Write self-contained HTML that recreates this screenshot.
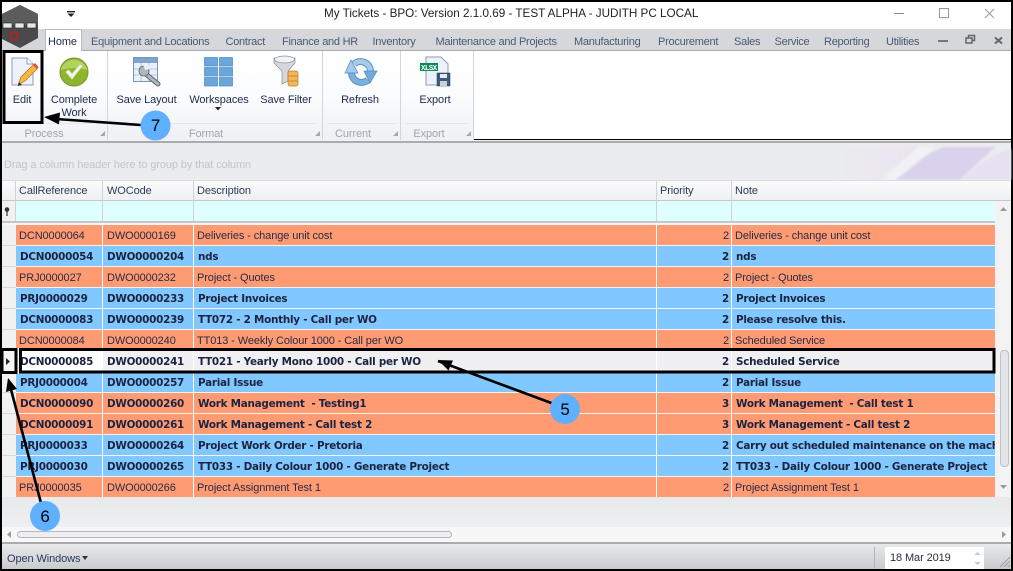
<!DOCTYPE html>
<html><head><meta charset="utf-8"><style>
html,body{margin:0;padding:0;background:#000}
#p{position:relative;width:1013px;height:571px;overflow:hidden;background:#000;font-family:"Liberation Sans",sans-serif;font-size:11px;letter-spacing:-.1px;color:#2a2f4f}
#p div,#p span{position:absolute;white-space:nowrap}
.a{line-height:14px}
.t{top:35px;color:#4a5a70;letter-spacing:-.25px}
.b{text-align:center;color:#1e2a50}
.g{top:127px;color:#a0a4ae;text-align:center}
.sep{top:51px;width:1px;height:89px;background:#d3d5da}
.h{top:184px;color:#2c3a5a}
.r{left:16px;width:979px;height:20px;overflow:hidden}
.o{background:#ff9b73}
.u{background:#80c8ff}
.s{background:#f0f0f2}
.r span{top:4px;line-height:14px;color:#2a2a44}
.c1{left:3px}.c2{left:91px}.c3{left:181px}.c4{left:641px;width:72px;text-align:right}.c5{left:719px}
.k span{font-family:"DejaVu Sans",sans-serif;font-weight:bold;font-size:10.4px;letter-spacing:-.25px;color:#1c2340}
.k .c1{left:4px}.k .c3{left:182px}.k .c5{left:720px}
.v{width:1px;background:#fff;top:225px;height:272px}
.i{left:2px;width:14px;height:20px;background:#f1f1f2;border-bottom:1px solid #d8d8da}
.l{width:1px;height:40px;top:181px;background:#d0d2d6}
</style></head><body><div id="p">
<div style="left:2px;top:2px;width:1009px;height:27px;background:#fff"></div>
<div style="left:2px;top:29px;width:1009px;height:21px;background:#d5d7db"></div>
<div style="left:2px;top:50px;width:1009px;height:1px;background:#a8abb0"></div>
<div class="a" style="left:324px;top:7px;color:#222;font-size:11.7px;letter-spacing:0">My Tickets - BPO: Version 2.1.0.69 - TEST ALPHA - JUDITH PC LOCAL</div>

<svg style="position:absolute;left:0;top:0" width="1013" height="60">
<polygon points="20,5 38,14 38,38 20,48 2,39 2,14" fill="#4a4a4c"/>
<polygon points="20,5 38,14 38,25 2,25 2,14" fill="#5c5c5e"/>
<rect x="3" y="23" width="9" height="5" fill="#e8e8e8" stroke="#222" stroke-width=".6"/><rect x="15" y="23" width="9" height="5" fill="#e8e8e8" stroke="#222" stroke-width=".6"/><rect x="27" y="23" width="9" height="5" fill="#e8e8e8" stroke="#222" stroke-width=".6"/>
<circle cx="14" cy="36" r="4" fill="none" stroke="#e01010" stroke-width="1.3"/>
<path d="M67 11h8v1.400h-8zM67.500 13.500h7l-3.500 3.500z" fill="#222"/>
<path d="M894 13.500h10" stroke="#888" fill="none"/>
<rect x="939.500" y="8.500" width="9" height="9" fill="none" stroke="#999"/>
<path d="M985 9l9 9M994 9l-9 9" stroke="#999" fill="none"/>
<rect x="938" y="40" width="10" height="2" fill="#777"/>
<path d="M966 38h6v5h-6zM968.500 38v-2.500h6v5h-2.500" fill="none" stroke="#666" stroke-width="1.500"/>
<path d="M995 37.500l7 6M1002 37.500l-7 6" stroke="#666" stroke-width="2" fill="none"/>
</svg>

<div style="left:45px;top:29px;width:37px;height:22px;background:#fff;border:1px solid #b9bcc2;border-bottom:0;box-sizing:border-box"></div>
<div class="a" style="left:48px;top:35px;color:#1e2a50">Home</div>
<div class="a t" style="left:91px">Equipment and Locations</div>
<div class="a t" style="left:225.500px">Contract</div>
<div class="a t" style="left:282px">Finance and HR</div>
<div class="a t" style="left:372.500px">Inventory</div>
<div class="a t" style="left:435.500px">Maintenance and Projects</div>
<div class="a t" style="left:574px">Manufacturing</div>
<div class="a t" style="left:658px">Procurement</div>
<div class="a t" style="left:734px">Sales</div>
<div class="a t" style="left:774.500px">Service</div>
<div class="a t" style="left:824px">Reporting</div>
<div class="a t" style="left:886px">Utilities</div>

<div style="left:2px;top:51px;width:471px;height:89px;background:linear-gradient(#fff 0,#fbfcfd 50%,#eef0f4 100%)"></div>
<div style="left:473px;top:51px;width:538px;height:88px;background:#fff"></div>
<div style="left:2px;top:140px;width:1009px;height:1px;background:#f0f1f3"></div>
<div style="left:2px;top:141px;width:1009px;height:2px;background:#a9abae"></div>
<div style="left:2px;top:143px;width:1009px;height:37px;background:#ebecef"></div>
<div class="sep" style="left:107px"></div><div class="sep" style="left:322px"></div><div class="sep" style="left:400px"></div><div class="sep" style="left:473px"></div>
<div style="left:8px;top:123px;width:94px;height:1px;background:#e4e6ea"></div>
<div style="left:112px;top:123px;width:205px;height:1px;background:#e4e6ea"></div>
<div style="left:328px;top:123px;width:67px;height:1px;background:#e4e6ea"></div>
<div style="left:406px;top:123px;width:62px;height:1px;background:#e4e6ea"></div>

<svg style="position:absolute;left:0;top:50px" width="480" height="92">
<!-- Edit -->
<path d="M12 8h15l6 6v21H12z" fill="#eef3fb" stroke="#8a9cc4"/>
<path d="M27 8v6h6" fill="#fff" stroke="#8a9cc4"/>
<path d="M18 35l3-8 13-13 4 4-13 13z" fill="#f5b642" stroke="#b86a1c" stroke-width=".7"/>
<path d="M33 15l4 4 1.500-2-3.500-4z" fill="#d8524a"/><path d="M18 36l1-4 3 3z" fill="#333"/>
<!-- complete -->
<circle cx="74" cy="22" r="14" fill="#8fb52c" stroke="#74962a"/>
<path d="M60.500 20a14 14 0 0 1 27 0a30 16 0 0 0-27 0" fill="#bcd86a" opacity=".8"/>
<path d="M66 22l6 7 10-13-2-1-8 9-3.500-4z" fill="#f4f6e8" stroke="#e6e8d8" stroke-width=".8"/>
<!-- save layout -->
<rect x="133.500" y="7.500" width="24" height="24" fill="#e9f0f8" stroke="#7c95b5"/>
<rect x="134" y="8" width="23" height="5" fill="#7fa5cf"/>
<path d="M134 19h23M134 25h23M141 13v18M149 13v18" stroke="#b8c8dc" fill="none"/>
<path d="M147 25L158 34" stroke="#5c6670" stroke-width="5" stroke-linecap="round"/>
<path d="M147 25L158 34" stroke="#b0b6bd" stroke-width="3" stroke-linecap="round"/>
<circle cx="144" cy="21" r="5" fill="#b0b6bd" stroke="#5c6670" stroke-width=".8"/>
<path d="M143 14l2 6 5-1-1-4-3-2z" fill="#e9f0f8"/>
<!-- workspaces -->
<g fill="#6aa6dc" stroke="#4a8ac2" stroke-width=".7"><rect x="204.500" y="7.500" width="13" height="8.500"/><rect x="219.500" y="7.500" width="13" height="8.500"/><rect x="204.500" y="17.500" width="13" height="8.500"/><rect x="219.500" y="17.500" width="13" height="8.500"/><rect x="204.500" y="27.500" width="13" height="8.500"/><rect x="219.500" y="27.500" width="13" height="8.500"/></g>
<path d="M215 57h6l-3 3.500z" fill="#222"/>
<!-- filter -->
<path d="M274 8h21v5l-7 8v10l-6 3V21l-8-8z" fill="#d4d8dc" stroke="#8a9098" stroke-width=".7"/>
<ellipse cx="284.500" cy="9.500" rx="10" ry="3.500" fill="#f2f3f5" stroke="#8a9098" stroke-width=".7"/>
<rect x="288" y="21" width="10" height="15" rx="2" fill="#f2b75a" stroke="#b87a24" stroke-width=".7"/>
<path d="M288 26h10M288 31h10" stroke="#c98b30" fill="none"/>
<!-- refresh -->
<path d="M354 14A10 10 0 0 1 370.500 21" fill="none" stroke="#5c93c4" stroke-width="7"/>
<path d="M354 14A10 10 0 0 1 370.500 21" fill="none" stroke="#a4cbea" stroke-width="5"/>
<path d="M364 21h13l-7 12z" fill="#74aadb" stroke="#4f86b8" stroke-width=".7"/>
<path d="M368 30A10 10 0 0 1 351.500 23" fill="none" stroke="#5c93c4" stroke-width="7"/>
<path d="M368 30A10 10 0 0 1 351.500 23" fill="none" stroke="#7cb0dc" stroke-width="5"/>
<path d="M345 23h13l-7-13z" fill="#a4cbea" stroke="#4f86b8" stroke-width=".7"/>
<!-- export -->
<path d="M426 7h15l7 7v21h-22z" fill="#eef2f8" stroke="#8a9cb8"/>
<rect x="420" y="13" width="18" height="8" fill="#0b8a5c"/>
<text x="421" y="20" font-family="Liberation Mono,monospace" font-weight="bold" font-size="7.500" fill="#fff" textLength="16">XLSX</text>
<rect x="437" y="23" width="13" height="13" fill="#3a5a80" stroke="#2a3a50" stroke-width=".5"/>
<rect x="440" y="24" width="7" height="4" fill="#e8ecf0"/><rect x="440" y="31" width="7" height="5" fill="#c8d0d8"/>
<path d="M100 86l5 0 0-5zM315 86l5 0 0-5zM393 86l5 0 0-5zM466 86l5 0 0-5z" fill="#a4a8ae"/>
</svg>

<div class="a b" style="left:2px;top:93px;width:40px">Edit</div>
<div class="a b" style="left:44px;top:93px;width:60px">Complete</div>
<div class="a b" style="left:44px;top:106px;width:60px">Work</div>
<div class="a b" style="left:110px;top:93px;width:73px">Save Layout</div>
<div class="a b" style="left:184px;top:93px;width:70px">Workspaces</div>
<div class="a b" style="left:256px;top:93px;width:60px">Save Filter</div>
<div class="a b" style="left:330px;top:93px;width:60px">Refresh</div>
<div class="a b" style="left:405px;top:93px;width:60px">Export</div>
<div class="a g" style="left:14px;width:60px">Process</div>
<div class="a g" style="left:176px;width:60px">Format</div>
<div class="a g" style="left:323px;width:60px">Current</div>
<div class="a g" style="left:399px;width:60px">Export</div>

<div class="a" style="left:4px;top:158px;color:#c2c4c9">Drag a column header here to group by that column</div>
<svg style="position:absolute;left:840px;top:147px;filter:blur(1px)" width="171" height="33">
<defs><linearGradient id="f1" x1="0" x2="1" y1="0" y2="0"><stop offset="0" stop-color="#ebecef"/><stop offset="1" stop-color="#ebe3f1"/></linearGradient></defs>
<path d="M0 0H80L38 33H0z" fill="url(#f1)"/>
<path d="M42 33L78 0H95L55 33z" fill="#f1f1f4"/>
<path d="M55 33C75 20 85 5 105 0H155C145 10 128 24 120 33z" fill="#d9d2ec"/>
<path d="M120 33C135 20 150 8 171 2V33z" fill="#e6e2f1"/>
</svg>

<div style="left:2px;top:180px;width:1009px;height:1px;background:#dcdde0"></div>
<div style="left:2px;top:181px;width:1009px;height:19px;background:linear-gradient(#fbfbfc,#eff0f2)"></div>
<div style="left:2px;top:200px;width:1009px;height:1px;background:#c6c8cc"></div>
<div class="a h" style="left:19px">CallReference</div>
<div class="a h" style="left:107px">WOCode</div>
<div class="a h" style="left:197px">Description</div>
<div class="a h" style="left:660px">Priority</div>
<div class="a h" style="left:735px">Note</div>
<div class="l" style="left:15px"></div><div class="l" style="left:102px"></div><div class="l" style="left:193px"></div><div class="l" style="left:656px"></div><div class="l" style="left:731px"></div>

<div style="left:2px;top:201px;width:1009px;height:296px;background:#f4f4f5"></div>
<div style="left:2px;top:201px;width:13px;height:20px;background:#f1f1f2"></div>
<div style="left:16px;top:201px;width:979px;height:20px;background:#dfffff"></div>
<div class="l" style="left:15px;top:201px;height:20px"></div><div class="l" style="left:102px;top:201px;height:20px"></div><div class="l" style="left:193px;top:201px;height:20px"></div><div class="l" style="left:656px;top:201px;height:20px"></div><div class="l" style="left:731px;top:201px;height:20px"></div>
<div style="left:2px;top:221px;width:993px;height:2px;background:#c5c6c9"></div>
<div style="left:2px;top:223px;width:993px;height:2px;background:#f6f6f7"></div>
<svg style="position:absolute;left:4px;top:206px" width="8" height="10"><circle cx="3" cy="3.500" r="2.300" fill="#333"/><path d="M3 5v5" stroke="#333" stroke-width="1.200"/></svg>

<div class="i" style="top:225px"></div><div class="i" style="top:246px"></div><div class="i" style="top:267px"></div><div class="i" style="top:288px"></div><div class="i" style="top:309px"></div><div class="i" style="top:330px"></div><div class="i" style="top:351px"></div><div class="i" style="top:372px"></div><div class="i" style="top:393px"></div><div class="i" style="top:414px"></div><div class="i" style="top:435px"></div><div class="i" style="top:456px"></div><div class="i" style="top:477px"></div>

<div class="r o" style="top:225px"><span class="c1">DCN0000064</span><span class="c2">DWO0000169</span><span class="c3">Deliveries - change unit cost</span><span class="c4">2</span><span class="c5">Deliveries - change unit cost</span></div>
<div class="r u k" style="top:246px"><span class="c1">DCN0000054</span><span class="c2">DWO0000204</span><span class="c3">nds</span><span class="c4">2</span><span class="c5">nds</span></div>
<div class="r o" style="top:267px"><span class="c1">PRJ0000027</span><span class="c2">DWO0000232</span><span class="c3">Project - Quotes</span><span class="c4">2</span><span class="c5">Project - Quotes</span></div>
<div class="r u k" style="top:288px"><span class="c1">PRJ0000029</span><span class="c2">DWO0000233</span><span class="c3">Project Invoices</span><span class="c4">2</span><span class="c5">Project Invoices</span></div>
<div class="r u k" style="top:309px"><span class="c1">DCN0000083</span><span class="c2">DWO0000239</span><span class="c3">TT072 - 2 Monthly - Call per WO</span><span class="c4">2</span><span class="c5">Please resolve this.</span></div>
<div class="r o" style="top:330px"><span class="c1">DCN0000084</span><span class="c2">DWO0000240</span><span class="c3">TT013 - Weekly Colour 1000 - Call per WO</span><span class="c4">2</span><span class="c5">Scheduled Service</span></div>
<div class="r s k" style="top:351px"><div style="left:0;top:0;width:86px;height:20px;background:#fff"></div><span class="c1">DCN0000085</span><span class="c2">DWO0000241</span><span class="c3">TT021 - Yearly Mono 1000 - Call per WO</span><span class="c4">2</span><span class="c5">Scheduled Service</span></div>
<div class="r u k" style="top:372px"><span class="c1">PRJ0000004</span><span class="c2">DWO0000257</span><span class="c3">Parial Issue</span><span class="c4">2</span><span class="c5">Parial Issue</span></div>
<div class="r o k" style="top:393px"><span class="c1">DCN0000090</span><span class="c2">DWO0000260</span><span class="c3">Work Management&nbsp; - Testing1</span><span class="c4">3</span><span class="c5">Work Management&nbsp; - Call test 1</span></div>
<div class="r o k" style="top:414px"><span class="c1">DCN0000091</span><span class="c2">DWO0000261</span><span class="c3">Work Management - Call test 2</span><span class="c4">3</span><span class="c5">Work Management - Call test 2</span></div>
<div class="r u k" style="top:435px"><span class="c1">PRJ0000033</span><span class="c2">DWO0000264</span><span class="c3">Project Work Order - Pretoria</span><span class="c4">2</span><span class="c5">Carry out scheduled maintenance on the machine</span></div>
<div class="r u k" style="top:456px"><span class="c1">PRJ0000030</span><span class="c2">DWO0000265</span><span class="c3">TT033 - Daily Colour 1000 - Generate Project</span><span class="c4">2</span><span class="c5">TT033 - Daily Colour 1000 - Generate Project</span></div>
<div class="r o" style="top:477px"><span class="c1">PRJ0000035</span><span class="c2">DWO0000266</span><span class="c3">Project Assignment Test 1</span><span class="c4">2</span><span class="c5">Project Assignment Test 1</span></div>
<div class="v" style="left:102px"></div><div class="v" style="left:193px"></div><div class="v" style="left:656px"></div><div class="v" style="left:731px"></div>

<div style="left:996px;top:201px;width:15px;height:296px;background:#f3f3f4"></div>
<div style="left:1000px;top:350px;width:7px;height:115px;background:#e4e5e8;border:1px solid #c0c2c6;border-radius:4px"></div>
<svg style="position:absolute;left:999px;top:205px" width="10" height="8"><path d="M1 6h7L4.500 2z" fill="#9a9ca0"/></svg>
<svg style="position:absolute;left:999px;top:483px" width="10" height="8"><path d="M1 2h7L4.500 6z" fill="#9a9ca0"/></svg>

<div style="left:2px;top:497px;width:1009px;height:30px;background:linear-gradient(#e8e9eb,#eeeff1)"></div>
<div style="left:2px;top:527px;width:1009px;height:15px;background:#f7f7f8"></div>
<div style="left:17px;top:531px;width:433px;height:5px;background:#eceef0;border:1px solid #b4b6ba;border-radius:4px"></div>
<svg style="position:absolute;left:5px;top:530px" width="8" height="10"><path d="M6 1v7L2 4.500z" fill="#9a9ca0"/></svg>
<svg style="position:absolute;left:1000px;top:530px" width="8" height="10"><path d="M2 1v7l4-3.500z" fill="#9a9ca0"/></svg>

<div style="left:2px;top:542px;width:1009px;height:2px;background:#a9abae"></div>
<div style="left:2px;top:544px;width:1009px;height:25px;background:linear-gradient(#e8e9eb,#c9cbcf)"></div>
<div class="a" style="left:7px;top:552px;color:#2a3a5a">Open Windows</div>
<svg style="position:absolute;left:81px;top:555px" width="8" height="6"><path d="M1 1h6L4 5z" fill="#333"/></svg>
<div style="left:874px;top:547px;width:1px;height:21px;background:#b0b2b6"></div>
<div style="left:885px;top:547px;width:99px;height:22px;background:#fff"></div>
<div class="a" style="left:890px;top:551px;color:#2a3040">18 Mar 2019</div>
<svg style="position:absolute;left:972px;top:549px" width="39" height="20"><path d="M2 6h7L5.500 3zM2 13h7l-3.500 3z" fill="#c8cacc"/><path d="M38 8L28 18M38 12L32 18M38 16L36 18" stroke="#9a9ca0" fill="none"/></svg>

<svg style="position:absolute;left:0;top:0" width="1013" height="571">
<rect x="4" y="51.500" width="38" height="71" fill="none" stroke="#000" stroke-width="3"/>
<rect x="20.500" y="349.500" width="973.500" height="22.500" fill="none" stroke="#000" stroke-width="3"/>
<rect x="2" y="348" width="17" height="26" fill="#f4f4f5" stroke="none"/>
<path d="M2 349.500H16V372.500H2" fill="none" stroke="#000" stroke-width="3"/>
<rect x="2" y="351" width="1.500" height="20" fill="#000"/>
<path d="M6 358v7l4-3.500z" fill="#222"/>
<g stroke="#000" stroke-width="2.600" fill="none"><path d="M141 125L56 119"/><path d="M438 361L554 404"/><path d="M9 382L41 503"/></g>
<path d="M44 117l16-4.500-1 12z" fill="#000"/>
<path d="M438 360l15 .5-4.500 10z" fill="#000"/>
<path d="M8 378l-2 14 11-3z" fill="#000"/>
<circle cx="155.500" cy="125.500" r="15" fill="#5fb0ff"/>
<circle cx="565" cy="409" r="15" fill="#5fb0ff"/>
<circle cx="45" cy="516" r="15" fill="#5fb0ff"/>
<text x="155.500" y="131" font-family="Liberation Sans,sans-serif" font-size="17" text-anchor="middle" fill="#000">7</text>
<text x="565" y="415" font-family="Liberation Sans,sans-serif" font-size="17" text-anchor="middle" fill="#000">5</text>
<text x="45" y="522" font-family="Liberation Sans,sans-serif" font-size="17" text-anchor="middle" fill="#000">6</text>
</svg>
</div></body></html>
